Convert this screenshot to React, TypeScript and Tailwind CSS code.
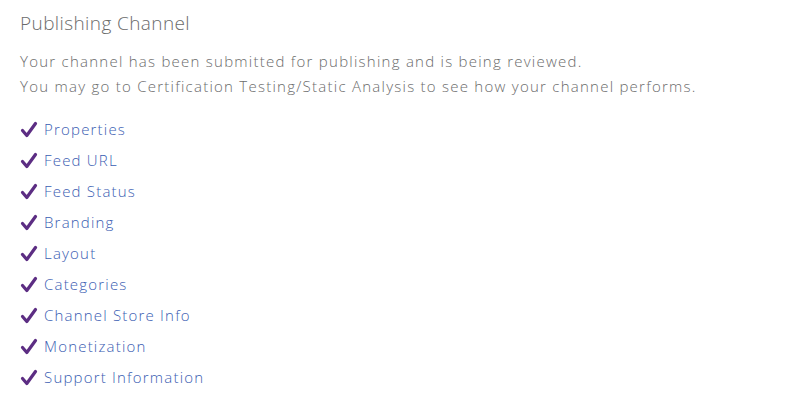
import React from 'react';

function Check() {
  return (
    <svg viewBox="0 0 18 18" className="w-[18px] h-[18px] shrink-0">
      <path d="M2.5 9.5 L6.8 14.5 L15.5 2.5" fill="none" stroke="#5c2d83" strokeWidth="3.2" strokeLinecap="round" strokeLinejoin="round" />
    </svg>
  );
}

export default function App() {
  const items = [
    'Properties',
    'Feed URL',
    'Feed Status',
    'Branding',
    'Layout',
    'Categories',
    'Channel Store Info',
    'Monetization',
    'Support Information',
  ];

  return (
    <div className="w-[797px] h-[406px] bg-white px-5 pt-[10px] font-['Open_Sans',sans-serif]">
      <h1 className="text-[19px] leading-[26px] font-light text-[#6b6b6b] tracking-[0.4px]">Publishing Channel</h1>
      <div className="mt-[13px] text-[15px] leading-[25px] font-light text-[#6b6b6b] tracking-[1.25px]">
        <p>Your channel has been submitted for publishing and is being reviewed.</p>
        <p>You may go to Certification Testing/Static Analysis to see how your channel performs.</p>
      </div>
      <ul className="mt-[15px]">
        {items.map((item) => (
          <li key={item} className="flex items-center h-[31px] gap-[6px]">
            <Check />
            <a href="#" className="text-[15px] font-light text-[#3a5db2] tracking-[1.2px]">{item}</a>
          </li>
        ))}
      </ul>
    </div>
  );
}
